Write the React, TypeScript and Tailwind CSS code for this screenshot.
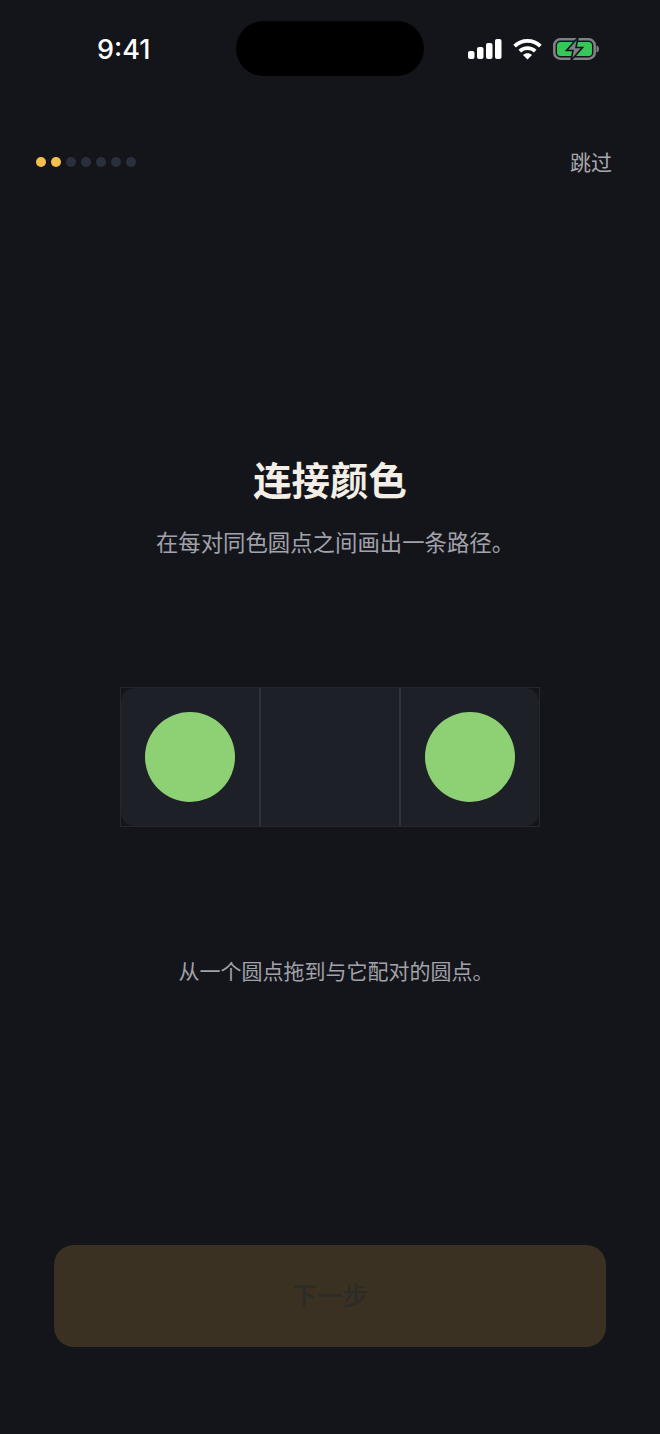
function SignalIcon() {
    return (
        <svg width="34" height="22" viewBox="0 0 34 22" fill="#fff">
            <rect x="0" y="13" width="6.5" height="8" rx="2" />
            <rect x="9" y="9" width="6.5" height="12" rx="2" />
            <rect x="18" y="5" width="6.5" height="16" rx="2" />
            <rect x="27" y="1" width="6.5" height="20" rx="2" />
        </svg>
    );
}

function WifiIcon() {
    return (
        <svg width="29" height="22" viewBox="0 0 29 22" fill="none" stroke="#fff" strokeWidth="3.8">
            <path d="M1.6 8.2 C8.8 1.2 20.2 1.2 27.4 8.2" />
            <path d="M6.8 13.2 C11 9.2 18 9.2 22.2 13.2" />
            <path d="M14.5 21.5 L10 17 C12.4 14.8 16.6 14.8 19 17 Z" fill="#fff" stroke="none" />
        </svg>
    );
}

function BatteryIcon() {
    return (
        <svg width="47" height="24" viewBox="0 0 47 24">
            <rect x="1.3" y="2.3" width="40.4" height="19.4" rx="6" fill="none" stroke="#7f8083" strokeWidth="2.6" />
            <rect x="4" y="5" width="35" height="14" rx="3.5" fill="#36c759" />
            <path d="M43.5 8.5 C45.5 9 46 10.5 46 12 C46 13.5 45.5 15 43.5 15.5 Z" fill="#7f8083" />
            <path d="M25 0.5 L13.5 13.5 H20 L18 23.5 L29.5 10.5 H23 Z" fill="#7f8083" stroke="#14151a" strokeWidth="1.6" />
        </svg>
    );
}

const progress = [true, true, false, false, false, false, false];

function App() {
    return (
        <div className="flex h-[1434px] w-[660px] flex-col bg-[#14151a] font-['Inter','Noto_Sans_CJK_SC',sans-serif]">
            <div className="flex h-[55px] mt-[21px] items-center">
                <div className="w-[236px] pl-[97px] pt-[3px] text-[27px] font-medium text-white">9:41</div>
                <div className="h-[55px] w-[188px] rounded-full bg-black"></div>
                <div className="flex flex-1 items-center pl-[44px]">
                    <SignalIcon />
                    <div className="ml-[11px] flex items-center gap-[11px]">
                        <WifiIcon />
                        <BatteryIcon />
                    </div>
                </div>
            </div>

            <div className="mt-[70px] flex items-center justify-between pl-[36px] pr-[48px]">
                <div className="flex gap-[5px] pb-[2px]">
                    {progress.map((done, index) => (
                        <span
                            key={index}
                            className={done ? "size-[10px] rounded-full bg-[#f5bf50]" : "size-[10px] rounded-full bg-[#2a303b]"}
                        ></span>
                    ))}
                </div>
                <span className="pt-[1px] text-[21px] leading-[32px] text-[#a8a9b0]">跳过</span>
            </div>

            <h1 className="mt-[276px] text-center text-[38.4px] leading-[52px] font-bold text-[#f3efe6]">连接颜色</h1>
            <p className="mt-[20px] pl-[10px] text-center text-[22.4px] leading-[32px] text-[#a1a2ab]">在每对同色圆点之间画出一条路径。</p>

            <div className="mt-[128px] self-center border border-[#25272e] bg-[#14151a]">
                <div className="flex h-[138px] w-[418px]">
                    <div className="flex w-[138px] items-center justify-center rounded-l-[14px] bg-[#1e2027]">
                        <span className="size-[90px] rounded-full bg-[#8ed174]"></span>
                    </div>
                    <div className="w-[2px] bg-[#2f3239]"></div>
                    <div className="w-[138px] bg-[#1e2027]"></div>
                    <div className="w-[2px] bg-[#2f3239]"></div>
                    <div className="flex w-[138px] items-center justify-center rounded-r-[14px] bg-[#1e2027]">
                        <span className="size-[90px] rounded-full bg-[#8ed174]"></span>
                    </div>
                </div>
            </div>

            <p className="mt-[130px] pl-[12px] text-center text-[21px] leading-[30px] text-[#a1a2ab]">从一个圆点拖到与它配对的圆点。</p>

            <button className="mx-[54px] mt-[258px] flex h-[102px] items-center justify-center rounded-[20px] bg-[#3a3123] text-[25.4px] font-medium text-[#2d2b26]">
                下一步
            </button>
        </div>
    );
}

export default App;
